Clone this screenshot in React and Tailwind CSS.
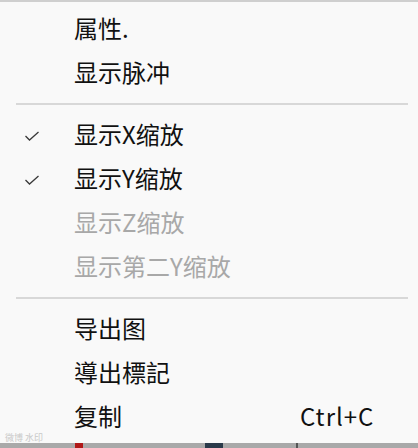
import React from "react";

const font = { fontFamily: '"Noto Sans CJK SC", "Noto Sans", sans-serif' };

function Check() {
  return (
    <svg width="16" height="12" viewBox="0 0 16 12" className="mt-[4px] block">
      <path d="M1.5 6 L5.5 10 L14.5 2" fill="none" stroke="#3a3a3a" strokeWidth="1.3" />
    </svg>
  );
}

function Item({ label, checked, disabled, shortcut }) {
  return (
    <div className="flex h-[44px] items-center">
      <div className="flex w-[74px] items-center pl-[24px]">{checked ? <Check /> : null}</div>
      <div className={"flex-1 text-[24px] leading-none " + (disabled ? "text-[#a8a8a8]" : "text-[#111]")}>{label}</div>
      {shortcut ? <div className="w-[118px] text-[24px] leading-none tracking-[1px] text-[#111]">{shortcut}</div> : null}
    </div>
  );
}

function Sep() {
  return (
    <div className="pb-[7px] pl-[16px] pr-[10px] pt-[9px]">
      <div className="h-[2px] bg-[#d8d8d8]" />
    </div>
  );
}

export default function App() {
  return (
    <div className="relative h-[448px] w-[418px] overflow-hidden bg-[#f9f9f9]" style={font}>
      <div className="h-[2px] bg-[#cfcfcf]" />
      <div className="pt-[4px]">
        <Item label="属性." />
        <Item label="显示脉冲" />
        <Sep />
        <Item label="显示X缩放" checked />
        <Item label="显示Y缩放" checked />
        <Item label="显示Z缩放" disabled />
        <Item label="显示第二Y缩放" disabled />
        <Sep />
        <Item label="导出图" />
        <Item label="導出標記" />
        <Item label="复制" shortcut="Ctrl+C" />
      </div>
      <div className="absolute bottom-[6px] left-[5px] text-[9px] leading-none text-[#c8c8c8]">微博 水印</div>
      <div className="absolute bottom-0 left-0 right-0 flex h-[5px] bg-[#a9a9a9]">
        <div className="ml-[75px] w-[8px] bg-[#b01818]" />
        <div className="ml-[122px] w-[18px] bg-[#2a3a4a]" />
        <div className="ml-[73px] w-[2px] bg-[#555]" />
      </div>
    </div>
  );
}
